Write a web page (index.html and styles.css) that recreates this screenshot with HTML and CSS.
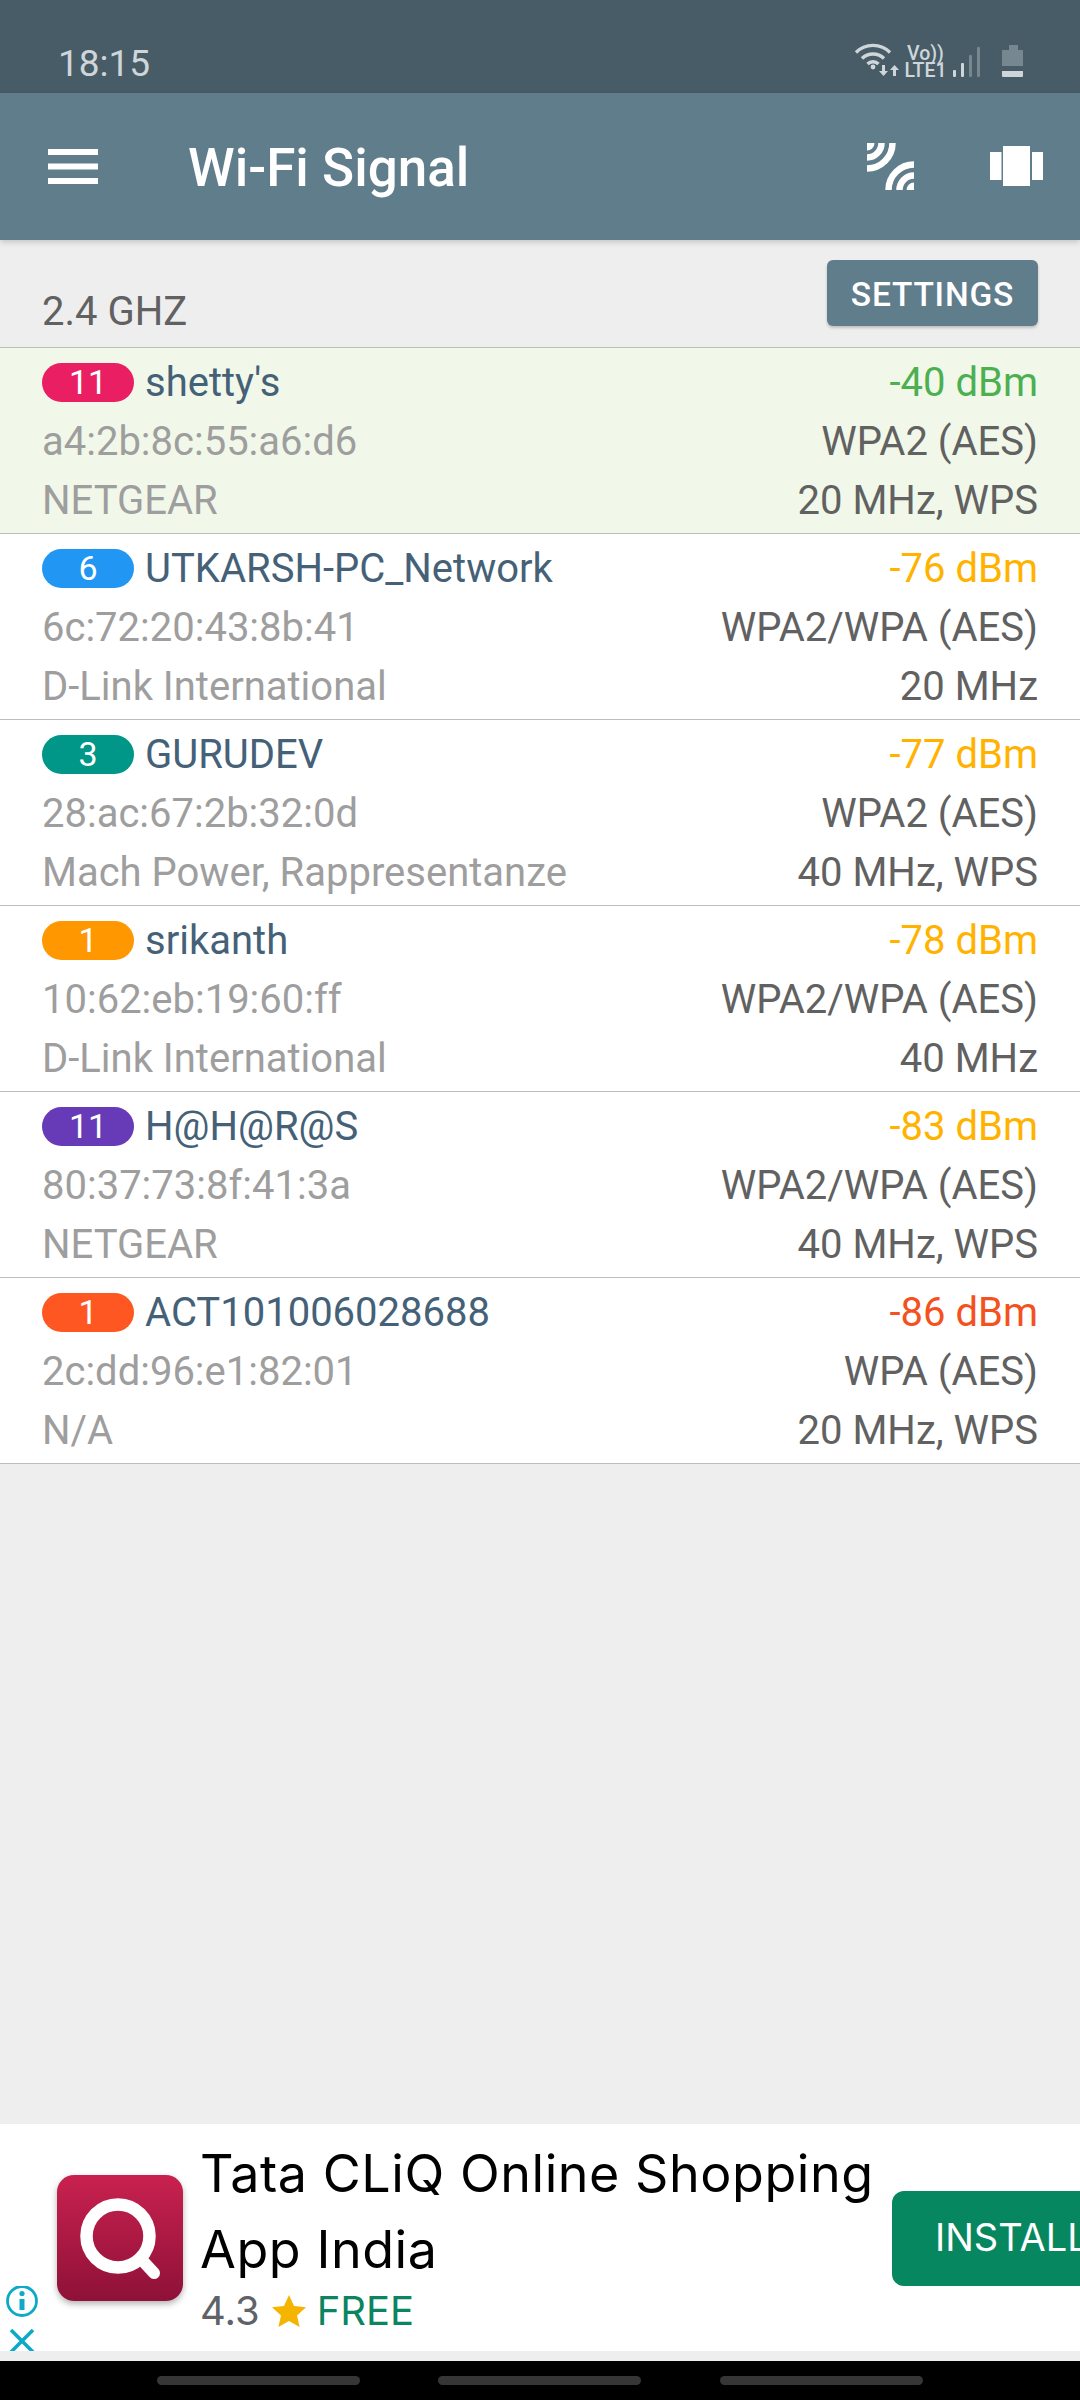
FILE: index.html
```html
<!DOCTYPE html>
<html lang="en">
<head>
<meta charset="utf-8">
<title>Wi-Fi Signal</title>
<link rel="stylesheet" href="styles.css">
</head>
<body>
<div class="page">
  <header class="status">
    <span class="time">18:15</span>
    <div class="status-icons">
      <svg class="si-wifi" width="46" height="34" viewBox="0 3 46 34">
        <g fill="none" stroke="#cfd6da" stroke-width="3.4">
          <path d="M2 12.5C11 3 27 3 36 12.5"/>
          <path d="M8 18.5C14 12.5 24 12.5 30 18.5"/>
          <path d="M13.5 24C16.5 21 21.5 21 24.5 24"/>
        </g>
        <circle cx="19" cy="27" r="2.4" fill="#cfd6da"/>
        <path d="M27 22h3v6h3l-4.500 5-4.500-5h3zM41 33h-3v-6h-3l4.500-5 4.500 5h-3z" fill="#cfd6da" transform="translate(1 3)"/>
      </svg>
      <div class="si-net"><span>Vo))</span><span>LTE1</span></div>
      <svg class="si-bars" width="27" height="30" viewBox="0 0 27 30">
        <rect x="0" y="23" width="3" height="7" rx="1" fill="#cfd6da"/>
        <rect x="8" y="16" width="3" height="14" rx="1" fill="#cfd6da"/>
        <rect x="16" y="8" width="3" height="22" rx="1" fill="#77878f"/>
        <rect x="24" y="0" width="3" height="30" rx="1" fill="#77878f"/>
      </svg>
      <svg class="si-batt" width="21" height="32" viewBox="0 0 21 32">
        <path d="M7 0h9v5h5v16H0V5h7z" fill="#77878f"/>
        <path d="M0 26h21v5a1 1 0 0 1-1 1H1a1 1 0 0 1-1-1z" fill="#cfd6da"/>
      </svg>
    </div>
  </header>
  <header class="appbar">
    <svg class="menu" width="50" height="35" viewBox="0 0 50 35" fill="#fff">
      <rect y="0" width="50" height="6"/>
      <rect y="14.500" width="50" height="6"/>
      <rect y="29" width="50" height="6"/>
    </svg>
    <h1 class="title">Wi-Fi Signal</h1>
    <svg class="act-tether" width="47" height="47" viewBox="0 0 47 47" fill="none" stroke="#fff" stroke-width="6.500">
      <path d="M0 25.500A25.500 25.500 0 0 0 25.500 0"/>
      <path d="M0 14.500A14.500 14.500 0 0 0 14.500 0"/>
      <path d="M0 0h7.500A7.500 7.500 0 0 1 0 7.500z" fill="#fff" stroke="none"/>
      <path d="M47 21.500A25.500 25.500 0 0 0 21.500 47"/>
      <path d="M47 32.500A14.500 14.500 0 0 0 32.500 47"/>
      <path d="M47 47h-7.500A7.500 7.500 0 0 1 47 39.500z" fill="#fff" stroke="none"/>
    </svg>
    <svg class="act-carousel" width="53" height="40" viewBox="0 0 53 40" fill="#fff">
      <rect x="0" y="6" width="11.500" height="28"/>
      <rect x="13" y="0" width="27" height="40"/>
      <rect x="42" y="6" width="11.500" height="28"/>
    </svg>
  </header>
  <main class="content">
    <div class="section">
      <span class="section-label">2.4 GHZ</span>
      <button class="settings">SETTINGS</button>
    </div>
    <article class="net net-active">
      <div class="line"><span class="id"><span class="badge b-pink">11</span><span class="name">shetty's</span></span><span class="dbm good">-40 dBm</span></div>
      <div class="line"><span class="sub">a4:2b:8c:55:a6:d6</span><span class="info">WPA2 (AES)</span></div>
      <div class="line"><span class="sub">NETGEAR</span><span class="info">20 MHz, WPS</span></div>
    </article>
    <article class="net">
      <div class="line"><span class="id"><span class="badge b-blue">6</span><span class="name">UTKARSH-PC_Network</span></span><span class="dbm fair">-76 dBm</span></div>
      <div class="line"><span class="sub">6c:72:20:43:8b:41</span><span class="info">WPA2/WPA (AES)</span></div>
      <div class="line"><span class="sub">D-Link International</span><span class="info">20 MHz</span></div>
    </article>
    <article class="net">
      <div class="line"><span class="id"><span class="badge b-teal">3</span><span class="name">GURUDEV</span></span><span class="dbm fair">-77 dBm</span></div>
      <div class="line"><span class="sub">28:ac:67:2b:32:0d</span><span class="info">WPA2 (AES)</span></div>
      <div class="line"><span class="sub">Mach Power, Rappresentanze</span><span class="info">40 MHz, WPS</span></div>
    </article>
    <article class="net">
      <div class="line"><span class="id"><span class="badge b-orange">1</span><span class="name">srikanth</span></span><span class="dbm fair">-78 dBm</span></div>
      <div class="line"><span class="sub">10:62:eb:19:60:ff</span><span class="info">WPA2/WPA (AES)</span></div>
      <div class="line"><span class="sub">D-Link International</span><span class="info">40 MHz</span></div>
    </article>
    <article class="net">
      <div class="line"><span class="id"><span class="badge b-purple">11</span><span class="name">H@H@R@S</span></span><span class="dbm fair">-83 dBm</span></div>
      <div class="line"><span class="sub">80:37:73:8f:41:3a</span><span class="info">WPA2/WPA (AES)</span></div>
      <div class="line"><span class="sub">NETGEAR</span><span class="info">40 MHz, WPS</span></div>
    </article>
    <article class="net">
      <div class="line"><span class="id"><span class="badge b-red">1</span><span class="name">ACT101006028688</span></span><span class="dbm weak">-86 dBm</span></div>
      <div class="line"><span class="sub">2c:dd:96:e1:82:01</span><span class="info">WPA (AES)</span></div>
      <div class="line"><span class="sub">N/A</span><span class="info">20 MHz, WPS</span></div>
    </article>
  </main>
  <aside class="ad">
    <div class="ad-app-icon">
      <svg width="126" height="126" viewBox="0 0 126 126" fill="none" stroke="#fff">
        <circle cx="61" cy="61" r="31.500" stroke-width="12.500"/>
        <path d="M84 84L97 98" stroke-width="12" stroke-linecap="round"/>
      </svg>
    </div>
    <div class="ad-text">
      <div class="ad-title">Tata CLiQ Online Shopping App India</div>
      <div class="ad-meta">
        <span class="ad-rating">4.3</span>
        <svg class="ad-star" width="34" height="32" viewBox="0 0 34 32"><path d="M17 0l5 11 12 1.300-9 8.200 2.600 11.500L17 26l-10.600 6L9 20.500 0 12.300 12 11z" fill="#f4b400"/></svg>
        <span class="ad-free">FREE</span>
      </div>
    </div>
    <div class="ad-install">INSTALL</div>
    <div class="ad-choices">
      <svg width="40" height="72" viewBox="0 0 40 72" fill="none" stroke="#0fa9c8">
        <circle cx="19" cy="15" r="14.500" stroke-width="2.800"/>
        <path d="M19 13v11" stroke-width="5"/>
        <circle cx="19" cy="7.500" r="2.600" fill="#0fa9c8" stroke="none"/>
        <path d="M8 44l22 22M30 44L8 66" stroke-width="3.600"/>
      </svg>
    </div>
  </aside>
  <div class="ad-gap"></div>
  <nav class="navbar">
    <span class="pill"></span>
    <span class="pill pill-2"></span>
    <span class="pill pill-3"></span>
  </nav>
</div>
</body>
</html>
```
FILE: styles.css
```css
* { box-sizing: border-box; }
html, body { margin: 0; padding: 0; }
body { font-family: Roboto, "Liberation Sans", sans-serif; background: #eeeeee; }
.page { width: 1080px; height: 2400px; display: flex; flex-direction: column; overflow: hidden; position: relative; }

.status { height: 93px; flex: none; background: #485c68; display: flex; justify-content: space-between; align-items: flex-end; padding: 0 57px 5px 58px; }
.time { font-size: 37px; line-height: 48px; color: #cfd6da; }
.status-icons { display: flex; align-items: flex-end; margin-bottom: 11px; }
.status-icons svg { display: block; flex: none; }
.si-net { width: 39px; margin: 0 8px -2px 6px; display: flex; flex-direction: column; align-items: center; font-size: 19.500px; font-weight: 500; line-height: 17px; color: #cfd6da; }
.si-batt { margin-left: 22px; }

.appbar { height: 147px; flex: none; background: #607d8b; display: flex; align-items: center; padding-left: 48px; box-shadow: 0 2px 6px rgba(0,0,0,.18); position: relative; z-index: 1; }
.menu { flex: none; }
.title { margin: 3px 0 0 90px; flex: 1; font-size: 53px; font-weight: 500; color: #fff; line-height: 60px; }
.act-tether { flex: none; margin-top: -1px; margin-right: 76px; }
.act-carousel { flex: none; margin-right: 37px; margin-top: -1px; }

.content { flex: 1; min-height: 0; }
.section { height: 108px; display: flex; justify-content: space-between; padding: 20px 42px 0 42px; border-bottom: 1.500px solid #bdbdbd; }
.section-label { font-size: 40px; color: #616161; line-height: 44px; margin-top: 30px; }
.settings { width: 211px; height: 66px; border: 0; border-radius: 6px; background: #607d8b; color: #fff; font-family: inherit; font-size: 33.500px; font-weight: 500; letter-spacing: .8px; padding: 2px 0 0; box-shadow: 0 2px 3px rgba(0,0,0,.2); }

.net { height: 186px; background: #fff; border-bottom: 1.500px solid #bdbdbd; padding: 5px 42px 0 42px; }
.net-active { background: #f1f8e9; }
.line { height: 59px; display: flex; justify-content: space-between; align-items: center; font-size: 40px; }
.id { display: flex; align-items: center; }
.badge { width: 92px; height: 39px; border-radius: 20px; color: #fff; font-size: 34px; line-height: 39px; text-align: center; margin-right: 11px; }
.b-pink { background: #e91e63; }
.b-blue { background: #2196f3; }
.b-teal { background: #009688; }
.b-orange { background: #ff9800; }
.b-purple { background: #673ab7; }
.b-red { background: #ff5722; }
.name { color: #456178; }
.sub { color: #9e9e9e; }
.info { color: #616161; }
.good { color: #4caf50; }
.fair { color: #ffb300; }
.weak { color: #f4511e; }

.ad { height: 227px; flex: none; background: #fff; display: flex; position: relative; padding-left: 57px; overflow: hidden; }
.ad-app-icon { width: 126px; height: 126px; flex: none; margin-top: 51px; border-radius: 17px; background: linear-gradient(#c9214f, #8e1138); box-shadow: 0 3px 6px rgba(0,0,0,.3); }
.ad-app-icon svg { display: block; }
.ad-text { width: 692px; flex: none; margin-left: 17px; padding-top: 12px; font-family: Inter, sans-serif; }
.ad-title { font-size: 52px; line-height: 76px; color: #000; letter-spacing: .55px; }
.ad-meta { display: flex; align-items: center; font-size: 40px; line-height: 50px; margin-top: -2px; }
.ad-rating { color: #5f6368; }
.ad-star { margin: 0 11px 0 12px; flex: none; }
.ad-free { color: #0b8561; }
.ad-install { width: 300px; height: 95px; flex: none; margin-top: 67px; border-radius: 12px; background: #07875f; color: #fff; font-family: Inter, sans-serif; font-size: 38px; line-height: 93px; padding-left: 43px; }
.ad-choices { position: absolute; left: 3px; bottom: -7px; width: 40px; height: 72px; background: #fff; }
.ad-choices svg { display: block; }

.ad-gap { height: 10px; flex: none; background: #eeeeee; }
.navbar { height: 39px; flex: none; background: #000; display: flex; padding: 15px 0 0 157px; }
.pill { height: 9px; width: 203px; border-radius: 5px; background: #363636; display: block; }
.pill-2 { margin-left: 78px; }
.pill-3 { margin-left: 79px; }
```
